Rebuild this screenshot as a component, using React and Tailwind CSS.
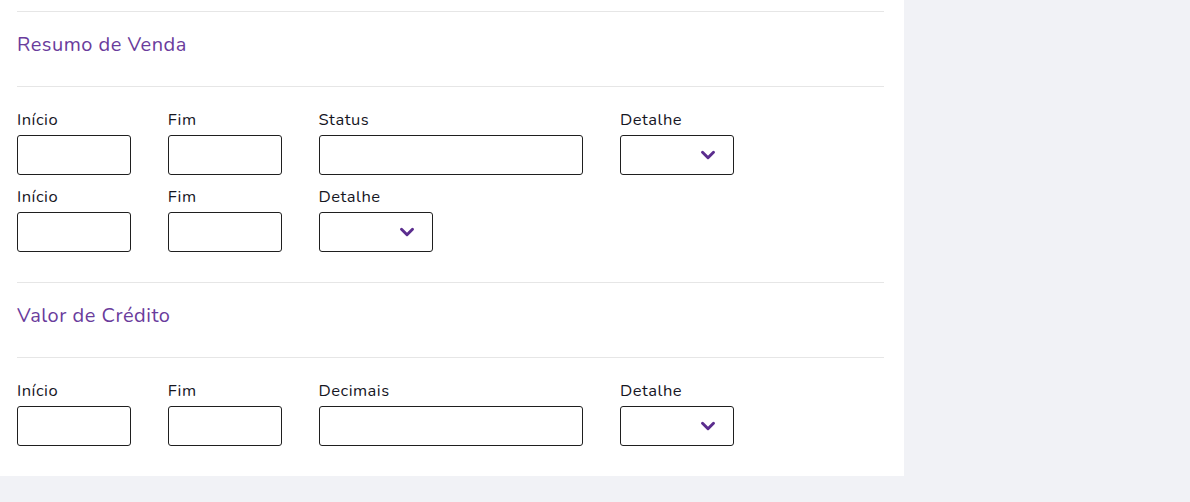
import { ChevronDown } from "lucide-react";

const font = { fontFamily: "'Nunito', 'Noto Sans', sans-serif" };

function Field({ label, wide, select }) {
  return (
    <div className={wide ? "col-span-2 flex flex-col" : "flex flex-col"}>
      <label className="text-[16.5px] leading-[24px] tracking-[0.5px] text-[#16161f] mb-[3px]">{label}</label>
      {select ? (
        <div className="h-10 border border-[#1f1f1f] rounded-[3px] flex items-center justify-end pr-[14px]">
          <ChevronDown size={22} strokeWidth={3.2} className="text-[#5b2d8e]" />
        </div>
      ) : (
        <input type="text" className="h-10 border border-[#1f1f1f] rounded-[3px] px-2 outline-none" />
      )}
    </div>
  );
}

function Section({ title }) {
  return (
    <div className="border-t border-[#e6e6e6] pt-[21px] pb-[29px]">
      <h2 className="text-[20px] leading-[24px] tracking-[0.5px] text-[#6a3c9c]">{title}</h2>
    </div>
  );
}

export default function App() {
  return (
    <div className="h-screen w-full bg-[#f1f2f6]" style={font}>
      <div className="w-[904px] bg-white pt-[11px] pl-[17px] pr-[20px]">
        <Section title="Resumo de Venda" />

        {/* Sale summary filters */}
        <div className="border-t border-[#e6e6e6] pt-[21px] pb-[30px] flex flex-col gap-y-[10px]">
          <div className="grid grid-cols-[114px_114px_114px_114px_114px] gap-x-[36.75px]">
            <Field label="Início" />
            <Field label="Fim" />
            <Field label="Status" wide />
            <Field label="Detalhe" select />
          </div>
          <div className="grid grid-cols-[114px_114px_114px_114px_114px] gap-x-[36.75px]">
            <Field label="Início" />
            <Field label="Fim" />
            <Field label="Detalhe" select />
          </div>
        </div>

        <Section title="Valor de Crédito" />

        {/* Credit value filters */}
        <div className="border-t border-[#e6e6e6] pt-[21px] pb-[30px]">
          <div className="grid grid-cols-[114px_114px_114px_114px_114px] gap-x-[36.75px]">
            <Field label="Início" />
            <Field label="Fim" />
            <Field label="Decimais" wide />
            <Field label="Detalhe" select />
          </div>
        </div>
      </div>
    </div>
  );
}
